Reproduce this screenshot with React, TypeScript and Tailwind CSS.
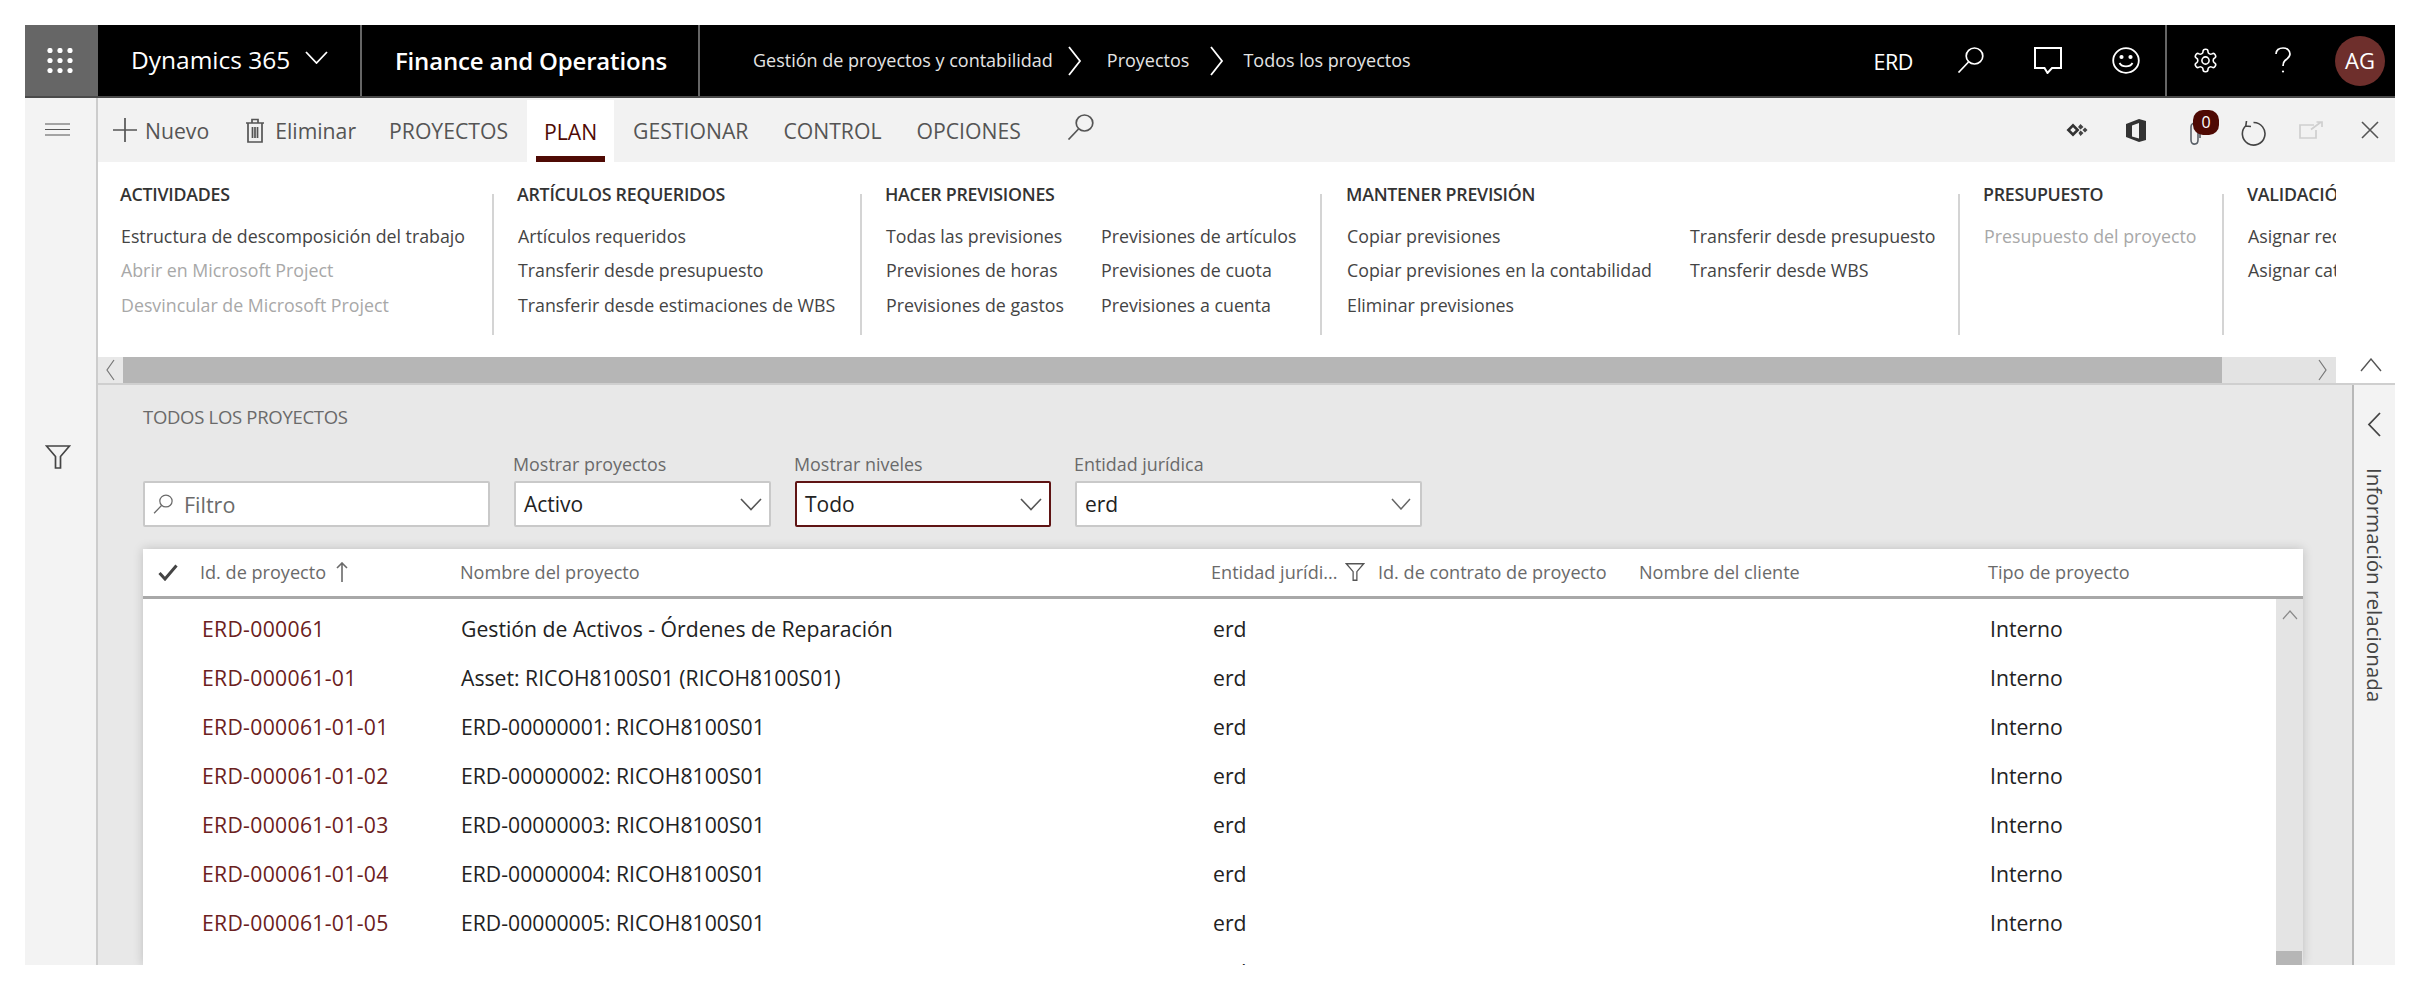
import React from "react";

const Chev = ({ d, w, h, cls = "", sw = 1.6 }: { d: string; w: number; h: number; cls?: string; sw?: number }) => (
  <svg width={w} height={h} viewBox={`0 0 ${w} ${h}`} fill="none" stroke="currentColor" strokeWidth={sw} className={cls}>
    <path d={d} />
  </svg>
);

const Search = ({ w = 27, h = 26, cls = "" }: { w?: number; h?: number; cls?: string }) => (
  <svg width={w} height={h} viewBox="0 0 27 26" fill="none" stroke="currentColor" strokeWidth="1.7" className={cls}>
    <ellipse cx="17.5" cy="9" rx="8.3" ry="8" />
    <path d="M11.5 15 L1.5 25.5" />
  </svg>
);

const Funnel = ({ w = 26, h = 24, cls = "" }: { w?: number; h?: number; cls?: string }) => (
  <svg width={w} height={h} viewBox="0 0 26 24" fill="none" stroke="currentColor" strokeWidth="1.7" className={cls}>
    <path d="M1.5 1 H24.5 L15.5 11.5 V23 H10.5 V11.5 Z" />
  </svg>
);

const ribbonLink = "h-[34.5px] flex items-center whitespace-nowrap";

const L = ({ t, off }: { t: string; off?: boolean }) => (
  <div className={`${ribbonLink} ${off ? "text-[#a8a8a8]" : "text-[#444444]"}`}>{t}</div>
);

const Head = ({ t }: { t: string }) => (
  <div className="h-[22px] leading-[22px] ml-[-1px] mt-[-1px] font-semibold text-[#333333] text-[17.8px] whitespace-nowrap tracking-[-0.25px]">{t}</div>
);

const Sep = () => <div className="w-[2px] h-[141px] mt-[10px] bg-[#d4d4d4] shrink-0" />;

const rows: [string, string][] = [
  ["ERD-000061", "Gestión de Activos - Órdenes de Reparación"],
  ["ERD-000061-01", "Asset: RICOH8100S01 (RICOH8100S01)"],
  ["ERD-000061-01-01", "ERD-00000001: RICOH8100S01"],
  ["ERD-000061-01-02", "ERD-00000002: RICOH8100S01"],
  ["ERD-000061-01-03", "ERD-00000003: RICOH8100S01"],
  ["ERD-000061-01-04", "ERD-00000004: RICOH8100S01"],
  ["ERD-000061-01-05", "ERD-00000005: RICOH8100S01"],
];

const Select = ({ label, value, w, focus, small }: { label: string; value: string; w: string; focus?: boolean; small?: boolean }) => (
  <div className={`${w} flex flex-col shrink-0`}>
    <div className="h-[22px] leading-[22px] text-[#6a6a6a] text-[17.9px] ml-[-1px] whitespace-nowrap">{label}</div>
    <div
      className={`mt-[6px] h-[46px] bg-white rounded-[2px] flex items-center justify-between pl-[8px] pr-[7px] text-[#222222] text-[21px] border-2 ${
        focus ? "border-[#5f1414]" : "border-[#c9c9c9]"
      }`}
    >
      <span className="mt-[1px]">{value}</span>
      {small ? (
        <Chev d="M1 1 L10 11 L19 1" w={20} h={12} cls="text-[#666666] mr-[2px]" sw={1.5} />
      ) : (
        <Chev d="M1 1 L11 11.5 L21 1" w={22} h={13} cls="text-[#555555]" />
      )}
    </div>
  </div>
);

export default function App() {
  return (
    <div className="w-[2432px] h-[1006px] bg-white pt-[25px] pl-[25px] overflow-hidden font-['Open_Sans',sans-serif]">
      <div className="w-[2370px] h-[940px] flex flex-col overflow-hidden">
        {/* top bar */}
        <div className="h-[73px] shrink-0 bg-black text-white flex border-b-2 border-[#4a4a4a]">
          <div className="w-[73px] bg-[#666666] flex items-center justify-center pr-[4px]">
            <svg width="26" height="25" viewBox="0 0 26 25" fill="#ffffff">
              {[2.5, 12.5, 22.5].map((y) =>
                [3, 13, 23].map((x) => <circle key={`${x}-${y}`} cx={x} cy={y} r="2.6" />)
              )}
            </svg>
          </div>
          <div className="w-[264px] border-r-2 border-[#666666] flex items-center pl-[33px]">
            <span className="text-[24.5px]">Dynamics 365</span>
            <Chev d="M1 1 L11.5 12 L22 1" w={23} h={13} cls="ml-[15px] mb-[6px]" sw={1.8} />
          </div>
          <div className="w-[338px] border-r-2 border-[#666666] flex items-center pl-[33px]">
            <span className="text-[24px] font-semibold tracking-[-0.18px] whitespace-nowrap">Finance and Operations</span>
          </div>
          <div className="flex-1 flex items-center pl-[53px] text-[18px]">
            <span className="whitespace-nowrap text-[#e4e4e4]">Gestión de proyectos y contabilidad</span>
            <Chev d="M1 1 L12 15 L1 29" w={14} h={30} cls="ml-[15px]" sw={1.8} />
            <span className="ml-[25px] text-[#e4e4e4]">Proyectos</span>
            <Chev d="M1 1 L12 15 L1 29" w={14} h={30} cls="ml-[21px]" sw={1.8} />
            <span className="ml-[19px] whitespace-nowrap text-[#e4e4e4]">Todos los proyectos</span>
            <div className="ml-auto flex items-center h-full">
              <span className="text-[21.5px] mr-[18px] tracking-[-0.4px] mt-[3px]">ERD</span>
              <div className="w-[78px] flex justify-center mb-[2px]">
                <Search />
              </div>
              <div className="w-[78px] flex justify-center">
                <svg width="28" height="27" viewBox="0 0 28 27" fill="none" stroke="#ffffff" strokeWidth="2">
                  <path d="M1 1 H27 V21 H18 L13.5 26 L10.5 21 H1 Z" />
                </svg>
              </div>
              <div className="w-[78px] flex justify-center">
                <svg width="28" height="27" viewBox="0 0 28 27" fill="none" stroke="#ffffff" strokeWidth="1.8">
                  <ellipse cx="14" cy="13.5" rx="12.8" ry="12.3" />
                  <circle cx="9.5" cy="10" r="1.2" fill="#ffffff" />
                  <circle cx="18.5" cy="10" r="1.2" fill="#ffffff" />
                  <path d="M7.5 16 C10 20.5 18 20.5 20.5 16" />
                </svg>
              </div>
              <div className="w-[2px] h-full bg-[#666666]" />
              <div className="w-[77px] flex justify-center">
                <svg width="27" height="27" viewBox="0 0 24 24" fill="none" stroke="#ffffff" strokeWidth="1.4" strokeLinecap="round" strokeLinejoin="round">
                  <path d="M12.22 2h-.44a2 2 0 0 0-2 2v.18a2 2 0 0 1-1 1.73l-.43.25a2 2 0 0 1-2 0l-.15-.08a2 2 0 0 0-2.73.73l-.22.38a2 2 0 0 0 .73 2.73l.15.1a2 2 0 0 1 1 1.72v.51a2 2 0 0 1-1 1.74l-.15.09a2 2 0 0 0-.73 2.73l.22.38a2 2 0 0 0 2.73.73l.15-.08a2 2 0 0 1 2 0l.43.25a2 2 0 0 1 1 1.73V20a2 2 0 0 0 2 2h.44a2 2 0 0 0 2-2v-.18a2 2 0 0 1 1-1.73l.43-.25a2 2 0 0 1 2 0l.15.08a2 2 0 0 0 2.73-.73l.22-.39a2 2 0 0 0-.73-2.73l-.15-.08a2 2 0 0 1-1-1.74v-.5a2 2 0 0 1 1-1.74l.15-.09a2 2 0 0 0 .73-2.73l-.22-.38a2 2 0 0 0-2.73-.73l-.15.08a2 2 0 0 1-2 0l-.43-.25a2 2 0 0 1-1-1.73V4a2 2 0 0 0-2-2z" />
                  <circle cx="12" cy="12" r="3.2" />
                </svg>
              </div>
              <div className="w-[77px] flex justify-center">
                <svg width="18" height="27" viewBox="0 0 18 27" fill="none" stroke="#ffffff" strokeWidth="1.7">
                  <path d="M2 7 C2 3 5 1 9 1 C13 1 16 3.5 16 7 C16 10 13.5 11.5 11 13.5 C9.5 14.8 9 16 9 19" />
                  <circle cx="9" cy="24.5" r="1.1" fill="#ffffff" stroke="none" />
                </svg>
              </div>
              <div className="ml-[14px] mr-[10px] w-[50px] h-[50px] rounded-full bg-[#6e2f2c] flex items-center justify-center text-[22px]">
                AG
              </div>
            </div>
          </div>
        </div>

        {/* below */}
        <div className="flex-1 flex min-h-0">
          {/* left nav */}
          <div className="w-[73px] shrink-0 bg-[#f3f3f3] border-r-2 border-[#cccccc] flex flex-col items-start pl-[20px] text-[#555555]">
            <svg width="25" height="13" viewBox="0 0 25 13" stroke="currentColor" strokeWidth="1.2" className="mt-[25px]">
              <path d="M0 1 H25 M0 6.5 H25 M0 12 H25" />
            </svg>
            <Funnel w={26} h={24} cls="mt-[309px] text-[#444444]" />
          </div>

          {/* main */}
          <div className="flex-1 min-w-0 flex flex-col">
            {/* action bar */}
            <div className="h-[64px] shrink-0 bg-[#f2f2f2] flex items-center text-[21.2px] text-[#555555] relative">
              <svg width="24" height="24" viewBox="0 0 24 24" stroke="currentColor" strokeWidth="1.7" className="ml-[15px]">
                <path d="M12 0 V24 M0 12 H24" />
              </svg>
              <span className="ml-[8px] mt-[2px]">Nuevo</span>
              <svg width="20" height="25" viewBox="0 0 20 25" fill="none" stroke="currentColor" strokeWidth="1.7" className="ml-[36px]">
                <path d="M1 5 H19 M7 5 V1.5 H13 V5 M3 5 V24 H17 V5 M7.5 9 V20 M10 9 V20 M12.5 9 V20" />
              </svg>
              <span className="ml-[10px] mt-[2px]">Eliminar</span>
              <span className="ml-[33px] mt-[2px]">PROYECTOS</span>
              <div className="ml-[19px] w-[87px] h-[62px] self-end bg-white flex flex-col items-center relative">
                <span className="text-[#4f0a04] mt-[16px]">PLAN</span>
                <div className="absolute bottom-0 left-[9px] right-[9px] h-[6px] bg-[#4f0a04]" />
              </div>
              <span className="ml-[19px] mt-[2px]">GESTIONAR</span>
              <span className="ml-[35px] mt-[2px]">CONTROL</span>
              <span className="ml-[35px] mt-[2px]">OPCIONES</span>
              <Search cls="ml-[46px] mb-[7px] text-[#555555]" />
              <div className="ml-auto flex items-center h-full">
                <svg width="22" height="14" viewBox="0 0 22 14" className="mr-[38px]">
                  <path fillRule="evenodd" d="M7 0.5 L13.5 7 L7 13.5 L0.5 7 Z M7 4.2 L4.2 7 L7 9.8 L9.8 7 Z" fill="#333333" />
                  <path d="M14.5 1 L17.5 4 L14.5 6.5 L12 4 Z M14.5 7.5 L17.5 10 L14.5 13 L12.5 10 Z M19 4.5 L21.5 7 L19 9.5 L16.5 7 Z" fill="#444444" />
                </svg>
                <svg width="20" height="23" viewBox="0 0 20 23" className="mr-[43px]">
                  <path fillRule="evenodd" d="M0 18 V5 L13 0 L20 2 V21 L13 23 Z M6 6.5 L13 4 V19.5 L6 17.5 Z" fill="#333333" />
                </svg>
                <div className="relative w-[12px] h-[24px] mr-[40px] mt-[7px]">
                  <svg width="12" height="24" viewBox="0 0 12 24" fill="none" stroke="#5a6068" strokeWidth="1.6">
                    <path d="M9 6 V18 C9 23.5 2 23.5 2 18 V5 C2 -0.5 11 -0.5 11 5 V16" />
                  </svg>
                  <div className="absolute left-[4px] top-[-12px] w-[26px] h-[25px] rounded-[10px] bg-[#4f0a04] text-white text-[16px] flex items-center justify-center">
                    0
                  </div>
                </div>
                <svg width="25" height="25" viewBox="0 0 25 25" fill="none" stroke="#444444" strokeWidth="1.6" className="mr-[33px] mt-[6px]">
                  <path d="M12.5 1.5 A11.3 11.3 0 1 1 5 4.5 M5.5 0 L4.8 5 L10 5.5" />
                </svg>
                <svg width="24" height="18" viewBox="0 0 24 18" fill="none" stroke="#cfcfcf" strokeWidth="1.7" className="mr-[38px]">
                  <path d="M15 4 H1 V17 H17 V9 M12 8.5 L22 1 M17.5 1 H23 V6" />
                </svg>
                <svg width="18" height="18" viewBox="0 0 18 18" fill="none" stroke="#555555" strokeWidth="1.6" className="mr-[16px]">
                  <path d="M1 1 L17 17 M17 1 L1 17" />
                </svg>
              </div>
            </div>

            {/* ribbon */}
            <div className="h-[195px] shrink-0 bg-white flex">
              <div className="w-[2238px] overflow-hidden flex pt-[22px] text-[17.8px] items-start">
                <div className="w-[394px] shrink-0 pl-[23px]">
                  <Head t="ACTIVIDADES" />
                  <div className="mt-[14px]">
                    <L t="Estructura de descomposición del trabajo" />
                    <L t="Abrir en Microsoft Project" off />
                    <L t="Desvincular de Microsoft Project" off />
                  </div>
                </div>
                <Sep />
                <div className="w-[366px] shrink-0 pl-[24px]">
                  <Head t="ARTÍCULOS REQUERIDOS" />
                  <div className="mt-[14px]">
                    <L t="Artículos requeridos" />
                    <L t="Transferir desde presupuesto" />
                    <L t="Transferir desde estimaciones de WBS" />
                  </div>
                </div>
                <Sep />
                <div className="w-[458px] shrink-0 pl-[24px]">
                  <Head t="HACER PREVISIONES" />
                  <div className="mt-[14px] flex">
                    <div className="w-[215px]">
                      <L t="Todas las previsiones" />
                      <L t="Previsiones de horas" />
                      <L t="Previsiones de gastos" />
                    </div>
                    <div>
                      <L t="Previsiones de artículos" />
                      <L t="Previsiones de cuota" />
                      <L t="Previsiones a cuenta" />
                    </div>
                  </div>
                </div>
                <Sep />
                <div className="w-[636px] shrink-0 pl-[25px]">
                  <Head t="MANTENER PREVISIÓN" />
                  <div className="mt-[14px] flex">
                    <div className="w-[343px]">
                      <L t="Copiar previsiones" />
                      <L t="Copiar previsiones en la contabilidad" />
                      <L t="Eliminar previsiones" />
                    </div>
                    <div>
                      <L t="Transferir desde presupuesto" />
                      <L t="Transferir desde WBS" />
                    </div>
                  </div>
                </div>
                <Sep />
                <div className="w-[262px] shrink-0 pl-[24px]">
                  <Head t="PRESUPUESTO" />
                  <div className="mt-[14px]">
                    <L t="Presupuesto del proyecto" off />
                  </div>
                </div>
                <Sep />
                <div className="w-[300px] shrink-0 pl-[24px]">
                  <Head t="VALIDACIÓN" />
                  <div className="mt-[14px]">
                    <L t="Asignar recursos" />
                    <L t="Asignar categorías" />
                  </div>
                </div>
              </div>
            </div>

            {/* scroll row */}
            <div className="h-[28px] shrink-0 flex border-b-2 border-[#cfcfcf]">
              <div className="w-[2238px] flex bg-[#b6b6b6]">
                <div className="w-[25px] bg-[#e8e8e8] flex items-center justify-center text-[#777777]">
                  <Chev d="M8 1 L1 11 L8 21" w={9} h={22} sw={1.2} />
                </div>
                <div className="flex-1" />
                <div className="w-[114px] bg-[#e3e3e3] flex items-center justify-end pr-[9px] text-[#777777]">
                  <Chev d="M1 1 L8 11 L1 21" w={9} h={22} sw={1.2} />
                </div>
              </div>
              <div className="flex-1 bg-white flex justify-center pl-[10px] pt-[1px] text-[#555555]">
                <Chev d="M1 13 L11 1 L21 13" w={22} h={14} sw={1.4} />
              </div>
            </div>

            {/* content */}
            <div className="flex-1 min-h-0 flex">
              <div className="flex-1 min-w-0 bg-[#e8e8e8] flex flex-col pl-[45px] pt-[21px]">
                <div className="h-[24px] leading-[24px] text-[#6a6a6a] text-[18.5px] tracking-[-0.3px] mt-[-1px] mb-[1px]">TODOS LOS PROYECTOS</div>
                <div className="mt-[23px] flex gap-[24px] items-end">
                  <div className="w-[347px] h-[46px] shrink-0 bg-white border-2 border-[#c9c9c9] rounded-[2px] flex items-center pl-[8px] text-[#6a6a6a] text-[21.5px]">
                    <Search w={20} h={20} />
                    <span className="ml-[11px] mt-[2px]">Filtro</span>
                  </div>
                  <Select label="Mostrar proyectos" value="Activo" w="w-[257px]" />
                  <Select label="Mostrar niveles" value="Todo" w="w-[256px]" focus />
                  <Select label="Entidad jurídica" value="erd" w="w-[347px]" small />
                </div>
                <div className="mt-[22px] w-[2160px] flex-1 min-h-0 bg-white shadow-[0_0_10px_rgba(0,0,0,0.18)] flex flex-col overflow-hidden">
                  <div className="h-[50px] shrink-0 border-b-[3px] border-[#a8a8a8] flex items-center text-[#6a6a6a] text-[18.1px]">
                    <div className="w-[57px] shrink-0 flex pl-[15px] text-[#444444]">
                      <svg width="20" height="17" viewBox="0 0 20 17" fill="none" stroke="currentColor" strokeWidth="3">
                        <path d="M1.5 9 L7 15 L18.5 1.5" />
                      </svg>
                    </div>
                    <div className="w-[260px] shrink-0 flex items-center">
                      <span className="mt-[1px]">Id. de proyecto</span>
                      <svg width="12" height="20" viewBox="0 0 12 20" fill="none" stroke="currentColor" strokeWidth="1.6" className="ml-[10px]">
                        <path d="M6 20 V1 M1 6 L6 1 L11 6" />
                      </svg>
                    </div>
                    <div className="w-[751px] shrink-0 mt-[1px]">Nombre del proyecto</div>
                    <div className="w-[167px] shrink-0 flex items-center">
                      <span className="whitespace-nowrap w-[134px] mt-[1px]">Entidad jurídi...</span>
                      <Funnel w={20} h={18} cls="text-[#555555]" />
                    </div>
                    <div className="w-[261px] shrink-0 whitespace-nowrap mt-[1px]">Id. de contrato de proyecto</div>
                    <div className="w-[349px] shrink-0 mt-[1px]">Nombre del cliente</div>
                    <div className="mt-[1px]">Tipo de proyecto</div>
                  </div>
                  <div className="flex-1 min-h-0 flex overflow-hidden">
                    <div className="flex-1 min-w-0 pt-[5px] text-[21.2px] text-[#222222]">
                      {[...rows, ["", ""] as [string, string]].map(([id, name], i) => (
                        <div key={i} className="h-[49px] shrink-0 flex items-center">
                          <div className="w-[57px] shrink-0" />
                          <div className="w-[260px] shrink-0 pl-[2px] text-[#6b2020] tracking-[0.3px]">{id}</div>
                          <div className="w-[751px] shrink-0 pl-[1px] whitespace-nowrap">{name}</div>
                          <div className="w-[167px] shrink-0 pl-[2px]">erd</div>
                          <div className="w-[610px] shrink-0" />
                          <div className="pl-[2px]">{id ? "Interno" : ""}</div>
                        </div>
                      ))}
                    </div>
                    <div className="w-[27px] shrink-0 bg-[#e4e4e4] flex flex-col justify-between items-center">
                      <Chev d="M1 9 L8 1 L15 9" w={16} h={10} cls="mt-[11px] text-[#8a8a8a]" sw={1.2} />
                      <div className="w-[26px] h-[14px] bg-[#b6b6b6] self-start" />
                    </div>
                  </div>
                </div>
              </div>
              {/* right panel */}
              <div className="w-[43px] shrink-0 bg-[#f3f3f3] border-l-2 border-[#b8b8b8] flex flex-col items-center">
                <Chev d="M13 1 L2 12.5 L13 24" w={15} h={25} cls="mt-[27px] text-[#444444]" sw={1.8} />
                <div className="mt-[31px] text-[20.6px] text-[#444444] [writing-mode:vertical-rl] whitespace-nowrap">Información relacionada</div>
              </div>
            </div>
          </div>
        </div>
      </div>
    </div>
  );
}
